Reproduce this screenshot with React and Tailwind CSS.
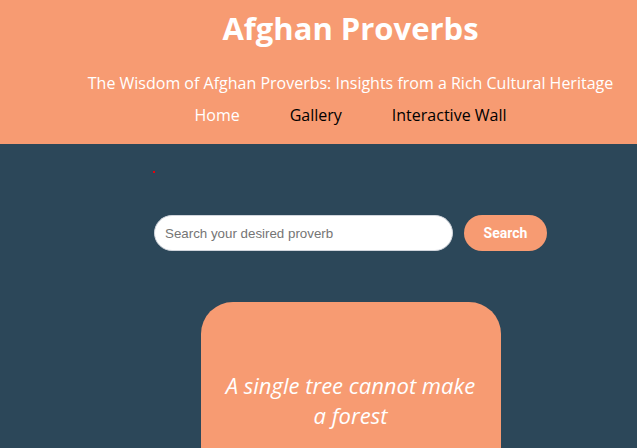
import React from 'react';

function App() {
  return (
    <div className="min-h-screen bg-[#2c4759] font-['Open_Sans',sans-serif]">
      <header className="bg-[#f79b72] h-[144px] pl-[64px] text-center">
        <h1 className="pt-[6px] text-[31px] leading-[44px] font-bold text-white">Afghan Proverbs</h1>
        <p className="mt-[21px] text-[16px] leading-[24px] text-white whitespace-nowrap">
          The Wisdom of Afghan Proverbs: Insights from a Rich Cultural Heritage
        </p>
        <nav className="mt-[8px] flex justify-center gap-[50px] text-[16px] leading-[24px]">
          <a className="text-white">Home</a>
          <a className="text-black">Gallery</a>
          <a className="text-black">Interactive Wall</a>
        </nav>
      </header>
      <main className="pl-[64px]">
        <div className="h-[71px] relative">
          <span className="absolute left-[89px] top-[27px] w-[2px] h-[2px] bg-red-600"></span>
        </div>
        <form className="flex justify-center gap-[11px]" onSubmit={(e) => e.preventDefault()}>
          <input
            type="text"
            placeholder="Search your desired proverb"
            className="w-[299px] h-[36px] rounded-full border border-gray-300 bg-white px-[10px] text-[13.33px] font-['Liberation_Sans',sans-serif] placeholder:text-[#757575] outline-none"
          />
          <button className="w-[83px] h-[36px] rounded-full bg-[#f79b72] text-white text-[14px] font-bold font-['Roboto',sans-serif]">
            Search
          </button>
        </form>
        <div className="mt-[51px] flex justify-center">
          <div className="w-[300px] h-[250px] rounded-[32px] bg-[#f79b72] pt-[68px] px-[20px] text-center">
            <p className="text-[22px] leading-[30px] italic text-white">A single tree cannot make a forest</p>
          </div>
        </div>
      </main>
    </div>
  );
}

export default App;
